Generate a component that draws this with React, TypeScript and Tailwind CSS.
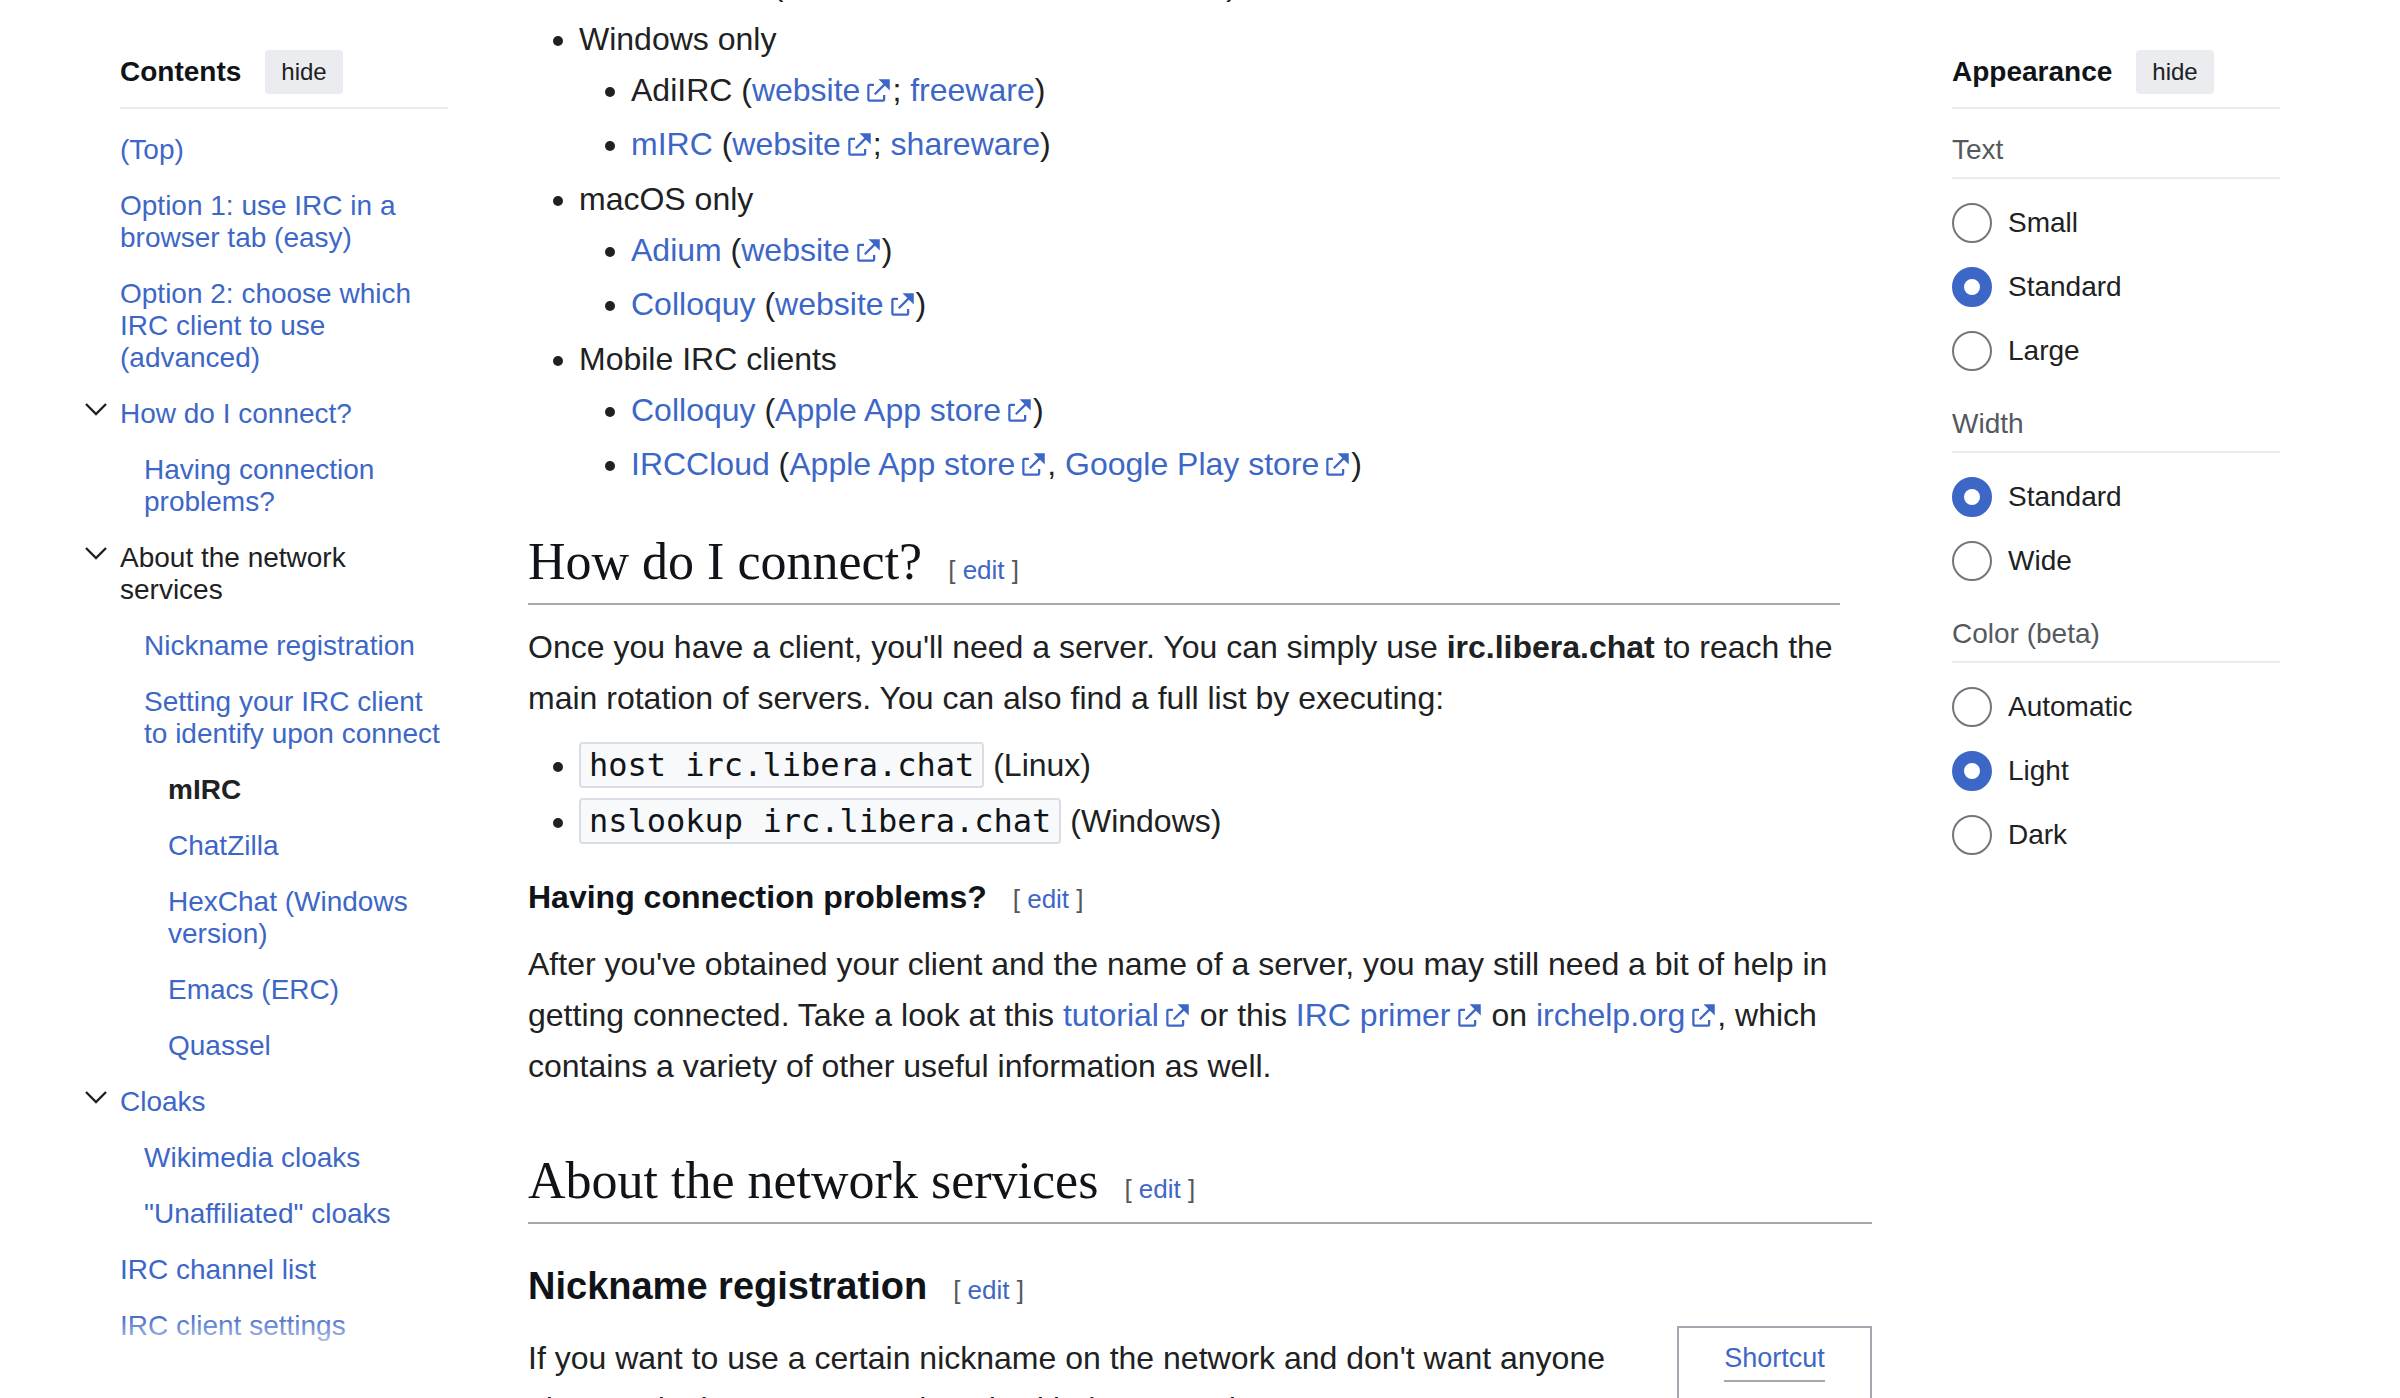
import React, { useState } from "react";

const LINK = "text-[#3d67c7] hover:underline";

type TocEntry = { label: string; level: 0 | 1 | 2; open?: boolean; state?: "parent" | "current" };

const TOC: TocEntry[] = [
  { label: "(Top)", level: 0 },
  { label: "Option 1: use IRC in a browser tab (easy)", level: 0 },
  { label: "Option 2: choose which IRC client to use (advanced)", level: 0 },
  { label: "How do I connect?", level: 0, open: true },
  { label: "Having connection problems?", level: 1 },
  { label: "About the network services", level: 0, open: true, state: "parent" },
  { label: "Nickname registration", level: 1 },
  { label: "Setting your IRC client to identify upon connect", level: 1 },
  { label: "mIRC", level: 2, state: "current" },
  { label: "ChatZilla", level: 2 },
  { label: "HexChat (Windows version)", level: 2 },
  { label: "Emacs (ERC)", level: 2 },
  { label: "Quassel", level: 2 },
  { label: "Cloaks", level: 0, open: true },
  { label: "Wikimedia cloaks", level: 1 },
  { label: '"Unaffiliated" cloaks', level: 1 },
  { label: "IRC channel list", level: 0 },
  { label: "IRC client settings", level: 0 },
];

const INDENT = ["pl-9", "pl-[60px]", "pl-[84px]"];

function Ext({ children }: { children: React.ReactNode }) {
  return (
    <a href="#external" className={LINK}>
      {children}
      <svg viewBox="0 0 12 12" aria-hidden="true" className="ml-[5px] inline size-[27px] align-[-3px]">
        <path
          fill="currentColor"
          d="M6 1h5v5L8.86 3.85 4.7 8 4 7.3l4.15-4.16zM2 3h2v1H2v6h6V8h1v2a1 1 0 0 1-1 1H2a1 1 0 0 1-1-1V4a1 1 0 0 1 1-1"
        />
      </svg>
    </a>
  );
}

function A({ children }: { children: React.ReactNode }) {
  return (
    <a href="#page" className={LINK}>
      {children}
    </a>
  );
}

function Edit() {
  return (
    <span className="ml-[26px] font-['Liberation_Sans',sans-serif] text-[26px] leading-8 font-normal whitespace-nowrap text-[#54595d]">
      [ <a href="#edit" className={LINK}>edit</a> ]
    </span>
  );
}

function PanelHeader({ title }: { title: string }) {
  return (
    <div className="flex items-center gap-6 border-b-2 border-[#eaecf0] pb-[13px]">
      <h2 className="text-[28px] leading-[44px] font-bold text-[#101418]">{title}</h2>
      <button type="button" className="h-11 rounded-sm bg-[#eaecf0] px-4 text-[24px] leading-[42px] text-[#202122]">
        hide
      </button>
    </div>
  );
}

function Contents() {
  return (
    <nav aria-label="Contents" className="w-[364px] shrink-0 text-[28px] leading-8">
      <div className="pl-9">
        <PanelHeader title="Contents" />
      </div>
      <ul className="pt-[13px]">
        {TOC.map((t) => (
          <li key={t.label} className={`relative py-3 ${INDENT[t.level]}`}>
            {t.open && (
              <button type="button" aria-label={`Toggle ${t.label} subsection`} className="absolute top-[10px] left-0 flex h-6 w-6 items-center justify-center">
                <svg viewBox="0 0 24 24" className="size-6" fill="none" stroke="#202122" strokeWidth="2.4">
                  <path d="M2 8l10 10 10-10" />
                </svg>
              </button>
            )}
            <a
              href="#section"
              className={
                t.state === "current"
                  ? "block font-bold text-[#202122]"
                  : t.state === "parent"
                    ? "block text-[#202122]"
                    : "block text-[#3d67c7] hover:underline"
              }
            >
              {t.label}
            </a>
          </li>
        ))}
      </ul>
      <div className="relative -mt-10 h-12 bg-linear-to-b from-white/0 to-white" />
    </nav>
  );
}

function RadioGroup({ legend, name, options, initial }: { legend: string; name: string; options: string[]; initial: string }) {
  const [value, setValue] = useState(initial);
  return (
    <fieldset className="pb-3">
      <legend className="w-full border-b-2 border-[#eaecf0] pt-[23px] pb-[9px] text-[28px] leading-[36px] text-[#54595d]">{legend}</legend>
      <div className="flex flex-col gap-6 pt-6">
        {options.map((o) => (
          <label key={o} className="flex items-center gap-4 text-[28px] leading-10 text-[#202122]">
            <input
              type="radio"
              name={name}
              checked={value === o}
              onChange={() => setValue(o)}
              className="size-10 appearance-none rounded-full border-2 border-[#72777d] bg-white checked:border-[12px] checked:border-[#3d67c7]"
            />
            {o}
          </label>
        ))}
      </div>
    </fieldset>
  );
}

const UL = "list-disc pl-[51px]";
const SUB = "list-disc pl-[52px]";
const GROUP = "mb-1";
const LI = "mb-[3px]";
const H2 = "mb-[17px] border-b-2 border-[#a2a9b1] pb-2 font-['Liberation_Serif',serif] text-[52px] leading-[66px] text-[#101418]";
const CODE = "rounded-sm border-2 border-[#dadde3] bg-[#f8f9fa] px-2 py-[2px] font-['DejaVu_Sans_Mono',monospace] text-[32px] text-[#101418]";

function Article() {
  return (
    <main className="-mt-[91px] min-w-0 flex-1 text-[32px] leading-[51px] text-[#202122]">
      <ul className={UL}>
        <li className={GROUP}>
          <ul className={SUB}>
            <li className={LI}>
              <A>WeeChat</A> (<Ext>website</Ext>; command-line client)
            </li>
          </ul>
        </li>
        <li className={GROUP}>
          Windows only
          <ul className={SUB}>
            <li className={LI}>AdiIRC (<Ext>website</Ext>; <A>freeware</A>)</li>
            <li className={LI}><A>mIRC</A> (<Ext>website</Ext>; <A>shareware</A>)</li>
          </ul>
        </li>
        <li className={GROUP}>
          macOS only
          <ul className={SUB}>
            <li className={LI}><A>Adium</A> (<Ext>website</Ext>)</li>
            <li className={LI}><A>Colloquy</A> (<Ext>website</Ext>)</li>
          </ul>
        </li>
        <li className={GROUP}>
          Mobile IRC clients
          <ul className={SUB}>
            <li className={LI}><A>Colloquy</A> (<Ext>Apple App store</Ext>)</li>
            <li className={LI}><A>IRCCloud</A> (<Ext>Apple App store</Ext>, <Ext>Google Play store</Ext>)</li>
          </ul>
        </li>
      </ul>

      <section className="mr-8">
        <h2 className={`mt-[39px] ${H2}`}>How do I connect?<Edit /></h2>
        <p>
          Once you have a client, you'll need a server. You can simply use <b>irc.libera.chat</b> to reach the main rotation of servers. You can also find a full list by executing:
        </p>
        <ul className={`mt-4 ${UL}`}>
          <li className="mb-[5px]"><code className={CODE}>host irc.libera.chat</code> (Linux)</li>
          <li className={LI}><code className={CODE}>nslookup irc.libera.chat</code> (Windows)</li>
        </ul>
        <h3 className="mt-[25px] mb-4 text-[32px] leading-[51px] font-bold text-[#101418]">Having connection problems?<Edit /></h3>
        <p>
          After you've obtained your client and the name of a server, you may still need a bit of help in getting connected. Take a look at this <Ext>tutorial</Ext> or this <Ext>IRC primer</Ext> on <Ext>irchelp.org</Ext>, which contains a variety of other useful information as well.
        </p>
      </section>

      <section>
        <h2 className={`mt-14 ${H2}`}>About the network services<Edit /></h2>
        <h3 className="mt-8 mb-[9px] text-[38px] leading-[61px] font-bold text-[#101418]">Nickname registration<Edit /></h3>
        <div className="flex items-start justify-between gap-8">
          <p className="max-w-[1110px] pt-[7px]">
            If you want to use a certain nickname on the network and don't want anyone else to take it, you must register it with the network.
          </p>
          <aside className="flex w-[195px] shrink-0 flex-col items-center gap-[6px] border-2 border-[#a2a9b1] pt-[9px] text-[27px] leading-[43px]">
            <a href="#shortcut" className="border-b-2 border-[#a2a9b1] text-[#3d67c7]">Shortcut</a>
            <a href="#wp-irc" className={LINK}>WP:IRC/T</a>
          </aside>
        </div>
      </section>
    </main>
  );
}

export default function App() {
  return (
    <div className="h-screen overflow-hidden bg-white pr-[120px] pl-[84px] pt-[50px] font-['Liberation_Sans',sans-serif]">
      <div className="flex items-start gap-20">
        <Contents />
        <Article />
        <aside aria-label="Appearance" className="w-[328px] shrink-0">
          <PanelHeader title="Appearance" />
          <form>
            <RadioGroup legend="Text" name="text" options={["Small", "Standard", "Large"]} initial="Standard" />
            <RadioGroup legend="Width" name="width" options={["Standard", "Wide"]} initial="Standard" />
            <RadioGroup legend="Color (beta)" name="color" options={["Automatic", "Light", "Dark"]} initial="Light" />
          </form>
        </aside>
      </div>
    </div>
  );
}
